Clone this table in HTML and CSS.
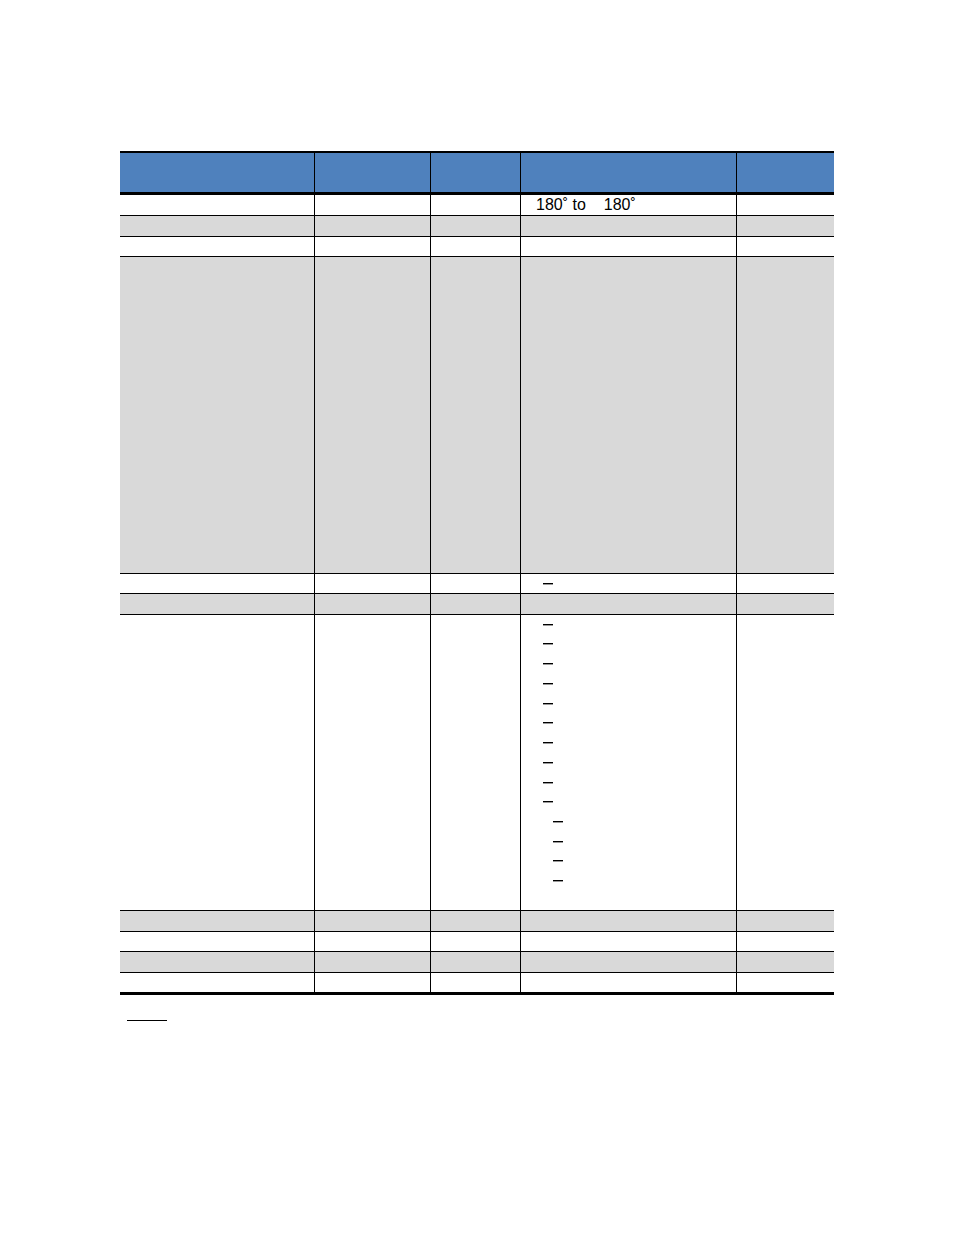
FILE: index.html
```html
<!DOCTYPE html>
<html>
<head>
<meta charset="utf-8">
<link rel="stylesheet" href="styles.css">
</head>
<body>
<div class="page">
  <div class="table">
    <div class="row head">
      <div class="cell"></div><div class="cell"></div><div class="cell"></div><div class="cell"></div><div class="cell"></div>
    </div>
    <div class="row h20">
      <div class="cell"></div><div class="cell"></div><div class="cell"></div>
      <div class="cell text"><span class="range">180˚ to<span class="gap"></span> 180˚</span></div>
      <div class="cell"></div>
    </div>
    <div class="row gray h20">
      <div class="cell"></div><div class="cell"></div><div class="cell"></div><div class="cell"></div><div class="cell"></div>
    </div>
    <div class="row h19">
      <div class="cell"></div><div class="cell"></div><div class="cell"></div><div class="cell"></div><div class="cell"></div>
    </div>
    <div class="row gray tall1">
      <div class="cell"></div><div class="cell"></div><div class="cell"></div><div class="cell"></div><div class="cell"></div>
    </div>
    <div class="row h19">
      <div class="cell"></div><div class="cell"></div><div class="cell"></div>
      <div class="cell list"><div class="line"><span class="dash"></span></div></div>
      <div class="cell"></div>
    </div>
    <div class="row gray h20">
      <div class="cell"></div><div class="cell"></div><div class="cell"></div><div class="cell"></div><div class="cell"></div>
    </div>
    <div class="row tall2">
      <div class="cell"></div><div class="cell"></div><div class="cell"></div>
      <div class="cell list">
        <div class="line s">
          <span class="dash"></span></div>
        <div class="line"><span class="dash"></span></div>
        <div class="line"><span class="dash"></span></div>
        <div class="line"><span class="dash"></span></div>
        <div class="line s"><span class="dash"></span></div>
        <div class="line"><span class="dash"></span></div>
        <div class="line"><span class="dash"></span></div>
        <div class="line"><span class="dash"></span></div>
        <div class="line s"><span class="dash"></span></div>
        <div class="line"><span class="dash"></span></div>
        <div class="line sub"><span class="dash"></span></div>
        <div class="line sub s"><span class="dash"></span></div>
        <div class="line sub"><span class="dash"></span></div>
        <div class="line sub"><span class="dash"></span></div>
      </div>
      <div class="cell"></div>
    </div>
    <div class="row gray h20">
      <div class="cell"></div><div class="cell"></div><div class="cell"></div><div class="cell"></div><div class="cell"></div>
    </div>
    <div class="row h19">
      <div class="cell"></div><div class="cell"></div><div class="cell"></div><div class="cell"></div><div class="cell"></div>
    </div>
    <div class="row gray h20">
      <div class="cell"></div><div class="cell"></div><div class="cell"></div><div class="cell"></div><div class="cell"></div>
    </div>
    <div class="row last h19">
      <div class="cell"></div><div class="cell"></div><div class="cell"></div><div class="cell"></div><div class="cell"></div>
    </div>
  </div>
  <div class="notes"></div>
</div>
</body>
</html>
```
FILE: styles.css
```css
html, body {
  margin: 0;
  padding: 0;
  background: #ffffff;
}
body {
  font-family: "Liberation Sans", Arial, sans-serif;
  font-size: 16px;
  color: #000;
}
.page {
  padding-top: 151px;
  padding-left: 120px;
}
.table {
  width: 714px;
  border-top: 2px solid #000;
  border-bottom: 3px solid #000;
}
.row {
  display: grid;
  grid-template-columns: 195px 116px 90px 216px 97px;
  border-bottom: 1px solid #000;
  box-sizing: content-box;
}
.row.last {
  border-bottom: none;
}
.row.head {
  height: 39px;
  background: #4f81bd;
  border-bottom: 3px solid #000;
}
.row.gray {
  background: #d9d9d9;
}
.h20 { height: 20px; }
.h19 { height: 19px; }
.tall1 { height: 316px; }
.tall2 { height: 295px; }
.cell {
  box-sizing: border-box;
  border-right: 1px solid #000;
  min-width: 0;
}
.cell:last-child {
  border-right: none;
}
.text {
  line-height: 20px;
  white-space: nowrap;
}
.range {
  padding-left: 15px;
}
.gap {
  display: inline-block;
  width: 13.5px;
}
.list {
  padding-left: 22px;
}
.line {
  height: 20px;
  display: flex;
  align-items: flex-start;
}
.line.s {
  height: 19px;
}
.line.sub {
  padding-left: 10px;
}
.dash {
  display: block;
  margin-top: 9px;
  width: 10px;
  height: 1px;
  background: #000;
  border-bottom: 1px solid #9a9a9a;
}
.notes {
  margin-top: 25px;
  margin-left: 7px;
  width: 40px;
  height: 0;
  border-bottom: 1px solid #000;
}
```
